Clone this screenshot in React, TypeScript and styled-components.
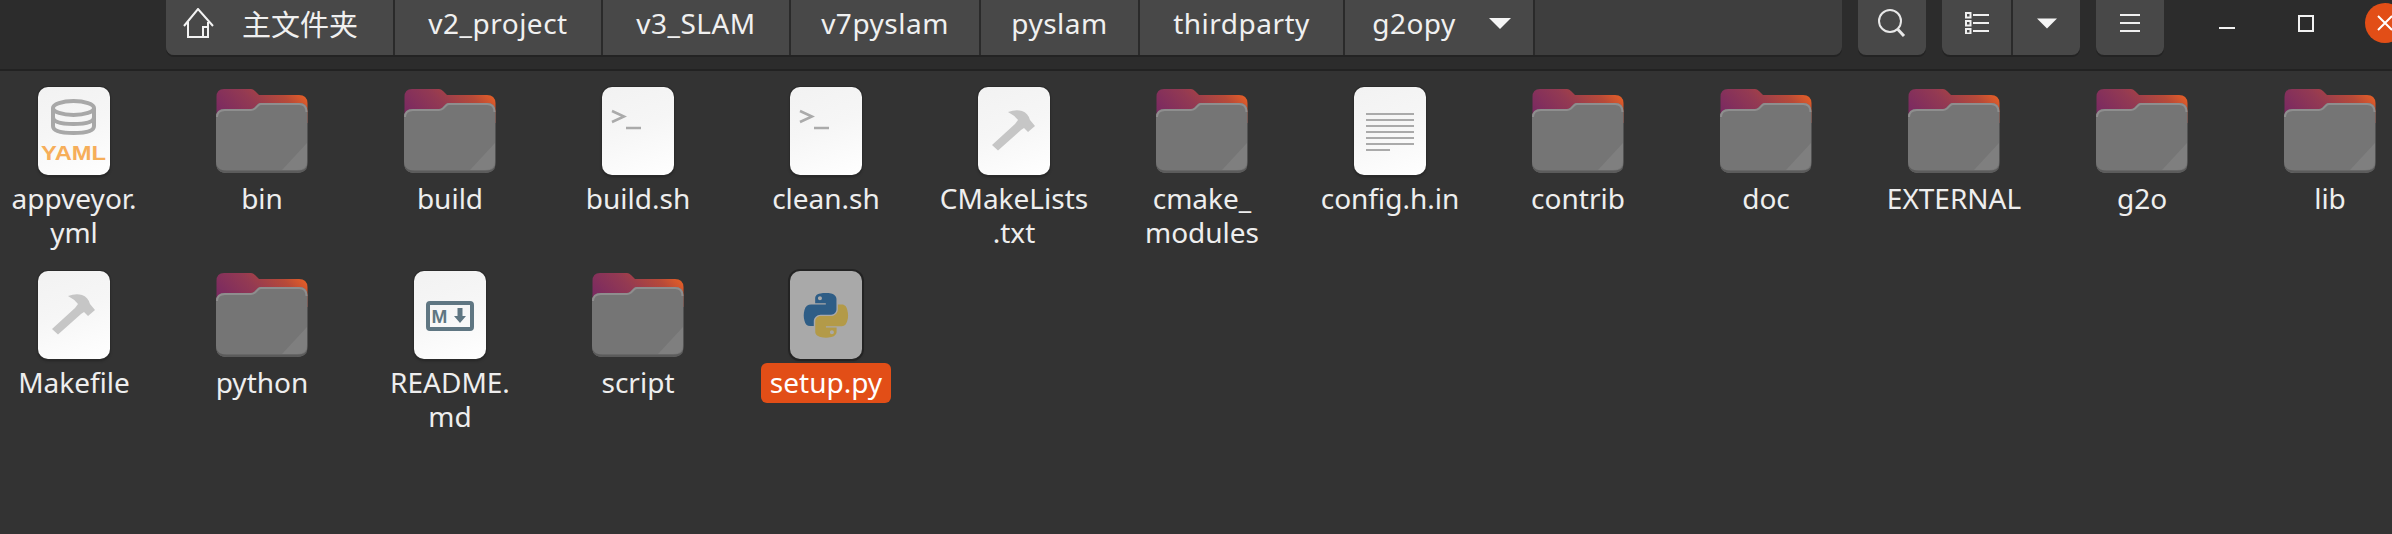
import React from 'react'
import styled, { createGlobalStyle } from 'styled-components'

const GlobalStyle = createGlobalStyle`
  html, body {
    margin: 0;
    width: 2392px;
    height: 534px;
    overflow: hidden;
    background: #333333;
    font-family: "Noto Sans", "Noto Sans CJK SC", sans-serif;
  }
`

const Window = styled.div`
  width: 2392px;
  height: 534px;
  overflow: hidden;
  display: flex;
  flex-direction: column;
`

const Header = styled.header`
  flex: none;
  height: 69px;
  display: flex;
  align-items: flex-start;
  padding-left: 166px;
  gap: 16px;
  background: #2c2c2c;
  border-bottom: 2px solid #222222;
`

const PathBar = styled.nav`
  flex: none;
  width: 1676px;
  height: 55px;
  display: flex;
  border-radius: 0 0 8px 8px;
  overflow: hidden;
  background: #3e3e3e;
  box-shadow: 0 2px 0 #232323;
`

const Crumb = styled.div<{ $w: number }>`
  flex: none;
  width: ${p => p.$w}px;
  height: 100%;
  display: flex;
  align-items: center;
  justify-content: center;
  padding-bottom: 9px;
  background: #484848;
  border-right: 2px solid #2a2a2a;
  box-sizing: border-box;
  color: #f0f0f0;
  font-size: 28px;
  letter-spacing: 0.5px;
  white-space: nowrap;
`

const HomeCrumb = styled(Crumb)`
  justify-content: flex-start;
  padding-left: 17px;
`

const HomeText = styled.span`
  margin-left: 28px;
  font-size: 29px;
  letter-spacing: 0;
`

const CrumbArrow = styled.span`
  display: flex;
  margin-left: 33px;
  margin-right: -5px;
`

const ToolButton = styled.div`
  flex: none;
  width: 68px;
  height: 55px;
  box-sizing: border-box;
  padding-bottom: 9px;
  display: flex;
  align-items: center;
  justify-content: center;
  background: #484848;
  border-radius: 0 0 8px 8px;
  box-shadow: 0 2px 0 #232323;
`

const SplitButton = styled.div`
  flex: none;
  width: 138px;
  height: 55px;
  display: grid;
  grid-template-columns: 69px 69px;
  background: #484848;
  border-radius: 0 0 8px 8px;
  box-shadow: 0 2px 0 #232323;
`

const SplitPart = styled.div<{ $divided?: boolean }>`
  display: flex;
  align-items: center;
  justify-content: center;
  padding-bottom: 9px;
  border-left: ${p => (p.$divided ? '2px solid #2a2a2a' : 'none')};
`

const WindowControls = styled.div`
  flex: none;
  display: grid;
  grid-template-columns: repeat(3, 79px);
  height: 40px;
  margin: 3px 0 0 7px;
`

const WindowControl = styled.div`
  display: flex;
  align-items: center;
  justify-content: center;
`

const CloseCircle = styled.div`
  flex: none;
  width: 40px;
  height: 40px;
  border-radius: 50%;
  background: #e24e17;
  display: flex;
  align-items: center;
  justify-content: center;
`

const Files = styled.main`
  flex: 1;
  margin-left: -20px;
  padding-top: 16px;
  display: grid;
  grid-template-columns: repeat(13, 188px);
  grid-auto-rows: 184px;
  background: #333333;
`

const FileCell = styled.div`
  display: flex;
  flex-direction: column;
  align-items: center;
`

const IconSlot = styled.div`
  height: 88px;
  display: flex;
  align-items: center;
  justify-content: center;
`

const Sheet = styled.div<{ $selected?: boolean }>`
  width: 72px;
  height: 88px;
  border-radius: 10px;
  overflow: hidden;
  background: ${p =>
    p.$selected ? '#a9a9a9' : 'linear-gradient(160deg, #f2f2f2 0%, #f6f6f6 45%, #ffffff 100%)'};
  box-shadow: 0 0 0 ${p => (p.$selected ? '2px #232323' : '1px #2b2b2b')}, 0 2px 3px rgba(0, 0, 0, 0.3);

  svg {
    display: block;
  }
`

const Label = styled.div<{ $selected?: boolean }>`
  margin-top: 4px;
  padding: 2px 9px 4px;
  border-radius: 6px;
  background: ${p => (p.$selected ? '#e24e17' : 'transparent')};
  color: ${p => (p.$selected ? '#ffffff' : '#eeeeee')};
  font-size: 28px;
  line-height: 34px;
  text-align: center;
  white-space: pre;
`

function HomeIcon() {
  return (
    <svg width="31" height="30" viewBox="0 0 31 30" fill="none" stroke="#f2f2f2" strokeWidth="2">
      <path d="M1 18 L15 1 L30 18" />
      <path d="M5 14 V29 H25 V14" />
      <path d="M20 29 V19 H25" />
    </svg>
  )
}

function DownTriangle({ width }: { width: number }) {
  return (
    <svg width={width} height="11" viewBox="0 0 22 11">
      <path d="M0 0 H22 L11 11 Z" fill="#f5f5f5" />
    </svg>
  )
}

function SearchIcon() {
  return (
    <svg width="28" height="28" viewBox="0 0 28 28" fill="none" stroke="#e8e8e8" strokeWidth="2">
      <ellipse cx="12" cy="12" rx="11" ry="11" />
      <path d="M19.5 20 L26 27" strokeWidth="3" />
    </svg>
  )
}

function ListIcon() {
  return (
    <svg width="24" height="22" viewBox="0 0 24 22" fill="none" stroke="#f0f0f0">
      {[0, 8, 16].map(y => (
        <React.Fragment key={y}>
          <rect x="1" y={y + 1} width="4.5" height="4.5" strokeWidth="2" />
          <path d={`M8 ${y + 3} H24`} strokeWidth="2" />
        </React.Fragment>
      ))}
    </svg>
  )
}

function MenuIcon() {
  return (
    <svg width="20" height="20" viewBox="0 0 20 20" stroke="#f0f0f0" strokeWidth="2">
      <path d="M0 2 H20 M0 10 H20 M0 18 H20" />
    </svg>
  )
}

function MinimizeIcon() {
  return (
    <svg width="16" height="40" viewBox="0 0 16 40">
      <rect x="0" y="24" width="16" height="2" fill="#f2f2f2" />
    </svg>
  )
}

function MaximizeIcon() {
  return (
    <svg width="16" height="17" viewBox="0 0 16 17" fill="none" stroke="#f2f2f2" strokeWidth="2">
      <rect x="1" y="1" width="14" height="15" />
    </svg>
  )
}

function CloseIcon() {
  return (
    <svg width="16" height="16" viewBox="0 0 16 16" stroke="#ffffff" strokeWidth="2">
      <path d="M1 1 L15 15 M15 1 L1 15" />
    </svg>
  )
}

function FolderIcon({ id }: { id: string }) {
  return (
    <svg width="92" height="84" viewBox="0 0 92 84">
      <defs>
        <linearGradient id={`back-${id}`} x1="0" y1="0.5" x2="1" y2="0.15">
          <stop offset="0" stopColor="#7c2b60" />
          <stop offset="0.4" stopColor="#943a52" />
          <stop offset="0.75" stopColor="#b84a38" />
          <stop offset="1" stopColor="#ec6224" />
        </linearGradient>
      </defs>
      <path
        d="M8 0 H35 Q37 0 39 2 L43 6 H83 Q91 6 91.500 14 V34 H0.500 V8 Q0.500 0 8 0 Z"
        fill={`url(#back-${id})`}
      />
      <path
        d="M9 20 H35 Q37 20 38 19 L42 15 Q43 14 45 14 H83 Q91.500 14 91.500 23 V73 Q91.500 84 80 84 H11 Q0 84 0 73 V29 Q0 20 9 20 Z"
        fill="#757575"
      />
      <path
        d="M1 28 Q1 21 9 21 H35 Q37 21 39 19.500 L42.500 16 Q43.500 15 45 15 H83 Q90.500 15 90.500 23"
        fill="none"
        stroke="#8e8e8e"
        strokeWidth="2"
      />
      <path d="M66 81 L91 54 V72 Q91 81 81 81 Z" fill="#7f7f7f" />
      <path d="M0.500 76 Q2 81.500 11 81.500 H81 Q90 81.500 91.500 76 Q91 84 80 84 H11 Q1 84 0.500 76 Z" fill="#5b5b5b" />
    </svg>
  )
}

type Glyph = 'yaml' | 'terminal' | 'hammer' | 'text' | 'markdown' | 'python'

function SheetGlyph({ kind }: { kind: Glyph }) {
  return (
    <svg width="72" height="88" viewBox="0 0 72 88">
      {kind === 'yaml' && (
        <g>
          <g fill="none" stroke="#a8a8a8" strokeWidth="4">
            <ellipse cx="35.500" cy="21" rx="20.500" ry="7" />
            <path d="M15 21 V39 Q15 46 35.500 46 Q56 46 56 39 V21" />
            <path d="M15 30 Q15 37 35.500 37 Q56 37 56 30" />
          </g>
          <text
            x="3"
            y="73"
            fontFamily='"Liberation Sans", sans-serif'
            fontWeight="700"
            fontSize="21"
            fill="#f6ae5a"
            textLength="65"
            lengthAdjust="spacingAndGlyphs"
          >
            YAML
          </text>
        </g>
      )}
      {kind === 'terminal' && (
        <g fill="none" stroke="#aaaaaa" strokeWidth="2.500">
          <path d="M10 24 L22 29.500 L10 35" />
          <path d="M24 41 H39" />
        </g>
      )}
      {kind === 'hammer' && (
        <path
          fill="#c6c6c6"
          d="M30 25 Q38 22 44 24 Q50 26 52 33 L57 39 L50 45 L46 41 L43 43 L20 63.500 L14 58 L37 37 L40 33 Q36 28 30 25 Z"
        />
      )}
      {kind === 'text' && (
        <g fill="#aaaaaa">
          {[26, 32, 38, 44, 50, 56].map(y => (
            <rect key={y} x="12" y={y} width="48" height="2" />
          ))}
          <rect x="12" y="62" width="24" height="2" />
        </g>
      )}
      {kind === 'markdown' && (
        <g>
          <rect x="14" y="32" width="44" height="26" rx="2" fill="none" stroke="#5f7682" strokeWidth="4" />
          <text
            x="17.500"
            y="52"
            fontFamily='"Liberation Sans", sans-serif'
            fontWeight="700"
            fontSize="19"
            fill="#5f7682"
          >
            M
          </text>
          <path d="M43.500 37 H48.500 V45 H52 L46 52 L40 45 H43.500 Z" fill="#5f7682" />
        </g>
      )}
      {kind === 'python' && (
        <g transform="translate(13.500 22) scale(0.405)">
          <path
            fill="#2e5d86"
            d="M54.900 0.100c-4.600 0-8.900.4-12.800 1.100C30.800 3.200 28.800 7.300 28.800 15v10.100h26.300v3.400H18.900c-7.700 0-14.400 4.600-16.500 13.300-2.400 10-2.500 16.200 0 26.600 1.900 7.800 6.300 13.300 14 13.300h9V69.800c0-8.700 7.500-16.300 16.500-16.300h26.300c7.300 0 13.200-6 13.200-13.400V15c0-7.100-6-12.500-13.200-13.700C63.600.4 59.400.1 54.900.1zM40.600 8.200c2.700 0 5 2.300 5 5 0 2.700-2.200 4.900-5 4.900-2.700 0-4.900-2.200-4.900-4.900 0-2.800 2.200-5 4.900-5z"
          />
          <path
            fill="#b39a48"
            d="M85 28.500v11.700c0 9.100-7.700 16.700-16.500 16.700H42.200c-7.200 0-13.200 6.200-13.200 13.400v25.100c0 7.100 6.200 11.300 13.200 13.400 8.300 2.400 16.300 2.900 26.300 0 6.600-1.900 13.200-5.800 13.200-13.400V85.300H55.400v-3.400h39.500c7.700 0 10.500-5.400 13.200-13.400 2.800-8.300 2.700-16.300 0-26.600-1.900-7.700-5.500-13.300-13.200-13.300H85zM70.200 91.900c2.700 0 4.900 2.200 4.900 4.900 0 2.800-2.200 5-4.900 5-2.700 0-5-2.200-5-5 0-2.700 2.300-4.900 5-4.900z"
          />
        </g>
      )}
    </svg>
  )
}

type Entry = { id: string; name: string; glyph?: Glyph; selected?: boolean }

const entries: Entry[] = [
  { id: 'appveyor', name: 'appveyor.\nyml', glyph: 'yaml' },
  { id: 'bin', name: 'bin' },
  { id: 'build', name: 'build' },
  { id: 'build-sh', name: 'build.sh', glyph: 'terminal' },
  { id: 'clean-sh', name: 'clean.sh', glyph: 'terminal' },
  { id: 'cmakelists', name: 'CMakeLists\n.txt', glyph: 'hammer' },
  { id: 'cmake-modules', name: 'cmake_\nmodules' },
  { id: 'config', name: 'config.h.in', glyph: 'text' },
  { id: 'contrib', name: 'contrib' },
  { id: 'doc', name: 'doc' },
  { id: 'external', name: 'EXTERNAL' },
  { id: 'g2o', name: 'g2o' },
  { id: 'lib', name: 'lib' },
  { id: 'makefile', name: 'Makefile', glyph: 'hammer' },
  { id: 'python', name: 'python' },
  { id: 'readme', name: 'README.\nmd', glyph: 'markdown' },
  { id: 'script', name: 'script' },
  { id: 'setup', name: 'setup.py', glyph: 'python', selected: true },
]

const crumbs = [
  { name: 'v2_project', w: 208 },
  { name: 'v3_SLAM', w: 188 },
  { name: 'v7pyslam', w: 190 },
  { name: 'pyslam', w: 159 },
  { name: 'thirdparty', w: 205 },
]

export default function App() {
  return (
    <Window>
      <GlobalStyle />
      <Header>
        <PathBar>
          <HomeCrumb $w={229}>
            <HomeIcon />
            <HomeText>主文件夹</HomeText>
          </HomeCrumb>
          {crumbs.map(c => (
            <Crumb key={c.name} $w={c.w}>
              {c.name}
            </Crumb>
          ))}
          <Crumb $w={190}>
            g2opy
            <CrumbArrow>
              <DownTriangle width={22} />
            </CrumbArrow>
          </Crumb>
        </PathBar>
        <ToolButton>
          <SearchIcon />
        </ToolButton>
        <SplitButton>
          <SplitPart>
            <ListIcon />
          </SplitPart>
          <SplitPart $divided>
            <DownTriangle width={20} />
          </SplitPart>
        </SplitButton>
        <ToolButton>
          <MenuIcon />
        </ToolButton>
        <WindowControls>
          <WindowControl>
            <MinimizeIcon />
          </WindowControl>
          <WindowControl>
            <MaximizeIcon />
          </WindowControl>
          <WindowControl>
            <CloseCircle>
              <CloseIcon />
            </CloseCircle>
          </WindowControl>
        </WindowControls>
      </Header>
      <Files>
        {entries.map(e => (
          <FileCell key={e.id}>
            <IconSlot>
              {e.glyph ? (
                <Sheet $selected={e.selected}>
                  <SheetGlyph kind={e.glyph} />
                </Sheet>
              ) : (
                <FolderIcon id={e.id} />
              )}
            </IconSlot>
            <Label $selected={e.selected}>{e.name}</Label>
          </FileCell>
        ))}
      </Files>
    </Window>
  )
}
